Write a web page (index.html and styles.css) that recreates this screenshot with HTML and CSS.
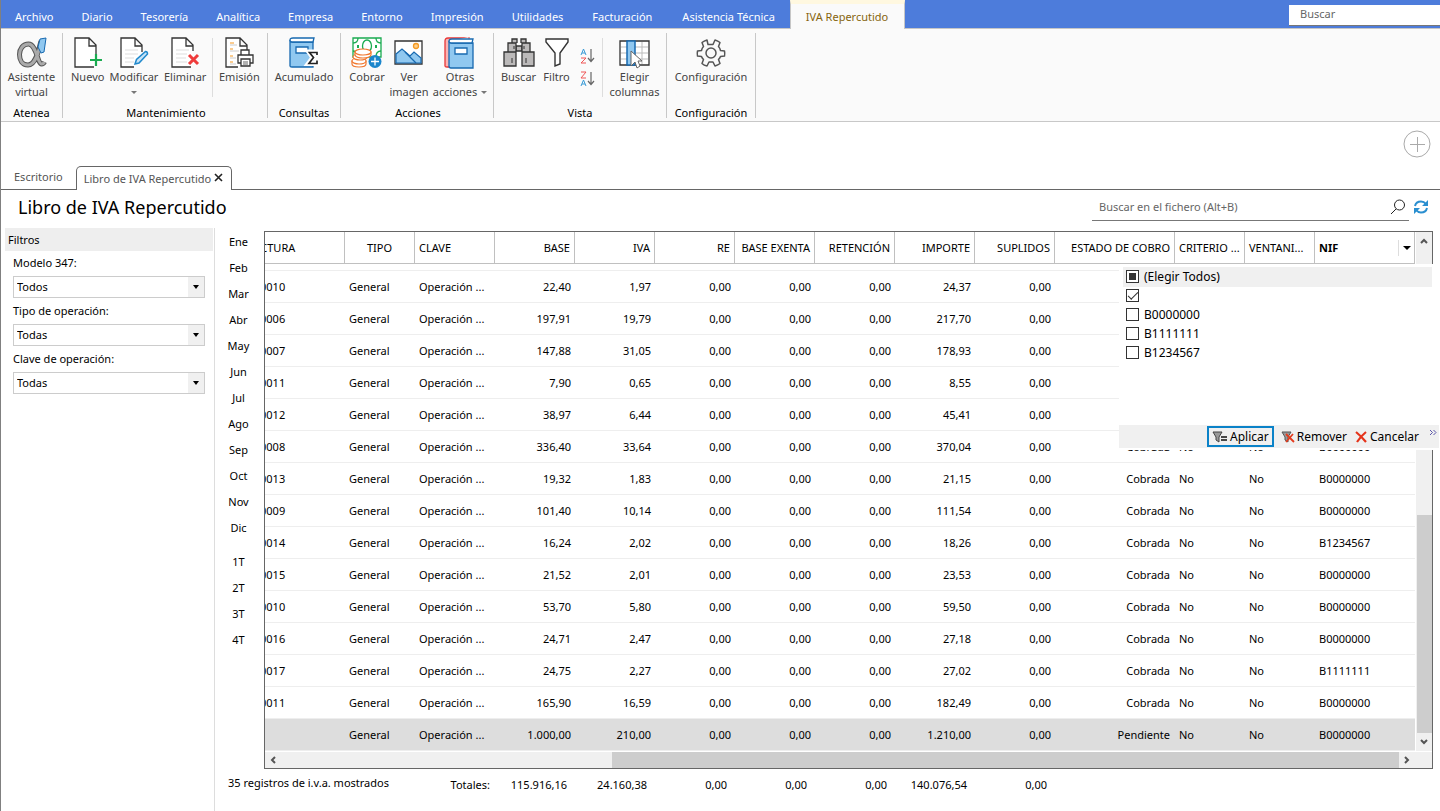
FILE: index.html
```html
<!DOCTYPE html>
<html lang="es">
<head>
<meta charset="utf-8">
<title>Libro de IVA Repercutido</title>
<link rel="stylesheet" href="styles.css">
</head>
<body>
<div class="app">
<header class="menubar">
  <nav class="menu">
    <button>Archivo</button><button>Diario</button><button>Tesorería</button><button>Analítica</button><button>Empresa</button><button>Entorno</button><button>Impresión</button><button>Utilidades</button><button class="roomy">Facturación</button><button class="roomy">Asistencia Técnica</button><button class="roomy current">IVA Repercutido</button>
  </nav>
  <input class="menu-search" type="text" placeholder="Buscar" aria-label="Buscar">
</header>

<section class="ribbon">
  <div class="group g-atenea">
    <div class="tools">
      <button class="tool w-wide">
        <svg width="32" height="32" viewBox="0 0 32 32"><path d="M25 4c-2 8-5 24-13 24C6 28 3.500 23 3.500 17.500S7 7 12.500 7c8 0 9 20 13 20 1.500 0 2.500-1 3-2" fill="none" stroke="#555" stroke-width="5"/><path d="M25 5c-2 8-5 23-13 23C6 28 3.500 23 3.500 17.500S7 7 12.500 7c8 0 9 20 13 20 1.500 0 2.500-1 3-2" fill="none" stroke="#aaa" stroke-width="3"/><path d="M24 2l6-1-2 14-3 1-3-6z" fill="#90c8f0" stroke="#1769b0"/></svg>
        <span>Asistente<br>virtual</span></button>
    </div>
    <h2>Atenea</h2>
  </div>
  <div class="group g-mant">
    <div class="tools">
      <button class="tool w-s">
        <svg width="32" height="32" viewBox="0 0 32 32"><path d="M22 30H3V1h14l7 7v9M17 1v8h7" fill="#fff" stroke="#333" stroke-width="1.300"/><path d="M24 17v12M18 23h12" stroke="#1aab50" stroke-width="2.200"/></svg>
        <span>Nuevo</span></button>
      <button class="tool w-l">
        <svg width="32" height="32" viewBox="0 0 32 32"><path d="M16 30H3V1h14l7 7v7M17 1v8h7" fill="#fff" stroke="#333" stroke-width="1.300"/><path d="M7 13h13M7 17h13M7 21h9M7 25h9" stroke="#ddd"/><path d="M17 27l1.500-4.500 9-8q2 0 2 2.500l-8.500 9z" fill="#c8e4f8" stroke="#2089cc" stroke-width="1.500"/></svg>
        <span>Modificar</span><i class="caret"></i></button>
      <button class="tool w-l">
        <svg width="32" height="32" viewBox="0 0 32 32"><path d="M22 30H3V1h14l7 7v6M17 1v8h7" fill="#fff" stroke="#333" stroke-width="1.300"/><path d="M7 13h13M7 17h11M7 21h10M7 25h11" stroke="#ddd"/><path d="M20 18l9 9M29 18l-9 9" stroke="#ef3b3b" stroke-width="3"/></svg>
        <span>Eliminar</span></button>
      <span class="split"></span>
      <button class="tool w-l">
        <svg width="32" height="32" viewBox="0 0 32 32"><path d="M15 30H3V1h14l7 7v6M17 1v8h7" fill="#fff" stroke="#333" stroke-width="1.300"/><path d="M7 6h4M7 12h3M7 19h3M7 25h3" stroke="#f59a23" stroke-width="1.200"/><path d="M7 8h7M7 14h9M7 21h6M7 27h6" stroke="#ccc"/><path d="M18 18v-5h8v5M18 26h-3v-8h15v8h-3M18 22h9v7h-9z" fill="#fff" stroke="#333" stroke-width="1.300"/><path d="M20 25h5M20 27h5" stroke="#666"/></svg>
        <span>Emisión</span></button>
    </div>
    <h2>Mantenimiento</h2>
  </div>
  <div class="group g-cons">
    <div class="tools">
      <button class="tool w-wide">
        <svg width="32" height="32" viewBox="0 0 32 32"><path d="M2 3v26q0 1 2 1h21V5H4q-2 0-2-2z" fill="#90c8f0" stroke="#1769b0" stroke-width="1.300"/><path d="M2 3q0-2 3-2h21l-1 4H5Q2 5 2 3z" fill="#fff" stroke="#1769b0" stroke-width="1.300"/><path d="M8 10h12v6H8z" fill="#fff" stroke="#1769b0" stroke-width="1.300"/><path d="M30 18v-3h-9l4 5.500-4.500 6H30v-3" fill="none" stroke="#fff" stroke-width="5"/><path d="M29 18v-2.500h-7.500l4 5-4.500 6H29v-3" fill="none" stroke="#222" stroke-width="1.700"/></svg>
        <span>Acumulado</span></button>
    </div>
    <h2>Consultas</h2>
  </div>
  <div class="group g-acc">
    <div class="tools">
      <button class="tool w-s">
        <svg width="32" height="32" viewBox="0 0 32 32"><path d="M2 1h28v19H2z" fill="#fff" stroke="#1aab50" stroke-width="1.300"/><path d="M2 6q5 0 5-5M30 6q-5 0-5-5M30 14q-5 0-5 6M2 14q3 0 4 3" fill="none" stroke="#1aab50" stroke-width="1.300"/><ellipse cx="16" cy="9" rx="4.500" ry="6" fill="#fff" stroke="#1aab50" stroke-width="1.300"/><path d="M7 8v3M25 8v3" stroke="#1aab50" stroke-width="2"/><g fill="#fff" stroke="#f07830" stroke-width="1.200"><path d="M1 24v3q0 3 7 3t7-3v-3z"/><ellipse cx="8" cy="24" rx="7" ry="3"/><ellipse cx="9" cy="20" rx="7" ry="3"/><path d="M4 15v3q1 3 8 3t8-3v-3z"/><ellipse cx="12" cy="15" rx="8" ry="3"/></g><circle cx="24" cy="24.500" r="6.500" fill="#1b86cc"/><path d="M24 20.500v8M20 24.500h8" stroke="#fff" stroke-width="1.300"/></svg>
        <span>Cobrar</span></button>
      <button class="tool w-s">
        <svg width="32" height="32" viewBox="0 0 32 32"><path d="M2 4h27v23H2z" fill="#fff" stroke="#333" stroke-width="1.300"/><path d="M3 17l6-5 8 7 4-4 7 6v5H3z" fill="#90c8f0" stroke="#1769b0" stroke-width="1.200"/><path d="M12 15l11 11" stroke="#1769b0" stroke-width="1.200"/><circle cx="23" cy="9" r="2.500" fill="#ffd08c" stroke="#f59a23" stroke-width="1.300"/></svg>
        <span>Ver<br>imagen</span></button>
      <button class="tool w-wide">
        <svg width="32" height="32" viewBox="0 0 32 32"><path d="M25 1H4Q1 1 1 4v25q0 1 2 1h4" fill="#f8b4b4" stroke="#e83838" stroke-width="1.300"/><path d="M25 0v4H5" fill="#fff" stroke="#e83838"/><path d="M5 4v25q0 2 2 2h22V6H8Q5 6 5 4z" fill="#90c8f0" stroke="#1769b0" stroke-width="1.300"/><path d="M5 4q0-2 3-2h21l-1 4H8Q5 6 5 4z" fill="#fff" stroke="#1769b0" stroke-width="1.300"/><path d="M11 11h12v6H11z" fill="#fff" stroke="#1769b0" stroke-width="1.300"/></svg>
        <span>Otras<br>acciones <i class="caret inline"></i></span></button>
    </div>
    <h2>Acciones</h2>
  </div>
  <div class="group g-vista">
    <div class="tools">
      <button class="tool w-s">
        <svg width="32" height="32" viewBox="0 0 32 32"><g fill="#bbb9b9" stroke="#333" stroke-width="1.300"><path d="M13 9h6v5h-6z"/><path d="M9 6V2h5v4M18 6V2h5v4M5 15V6h8v9M19 15V6h8v9M1 29V15h12v14zM19 29V15h12v14z"/></g><path d="M9 21v5M23 21v5M11 9v3M21 9v3" stroke="#333"/></svg>
        <span>Buscar</span></button>
      <button class="tool w-s">
        <svg width="32" height="32" viewBox="0 0 32 32"><path d="M5 2h22v3l-8 11v11l-5 2V16L5 5z" fill="#fff" stroke="#333" stroke-width="1.400"/></svg>
        <span>Filtro</span></button>
      <div class="sorts">
        <button aria-label="Orden ascendente"><svg width="16" height="16" viewBox="0 0 16 16"><path d="M1 7l2.500-6L6 7M2 5h3" fill="none" stroke="#389ad6"/><path d="M1 10h5l-5 5h5" fill="none" stroke="#ef5555"/><path d="M11 1v12M8 10l3 3.500 3-3.500" fill="none" stroke="#666" stroke-width="1.200"/></svg></button>
        <button aria-label="Orden descendente"><svg width="16" height="16" viewBox="0 0 16 16"><path d="M1 1h5L1 7h5" fill="none" stroke="#ef5555"/><path d="M1 15l2.500-6L6 15M2 13h3" fill="none" stroke="#389ad6"/><path d="M11 1v12M8 10l3 3.500 3-3.500" fill="none" stroke="#666" stroke-width="1.200"/></svg></button>
      </div>
      <span class="split"></span>
      <button class="tool w-l">
        <svg width="32" height="32" viewBox="0 0 32 32"><path d="M1 4h29v24H1z" fill="#fff" stroke="#333" stroke-width="1.300"/><path d="M2 10h27M2 16h27M2 22h27M23 5v22" stroke="#bbb"/><path d="M8 4h8v24H8z" fill="#90c8f0" stroke="#1769b0" stroke-width="1.500"/><path d="M12 14l11 10h-4l2 5-3 2-2-6-4 4z" fill="#fff" stroke="#666"/></svg>
        <span>Elegir<br>columnas</span></button>
    </div>
    <h2>Vista</h2>
  </div>
  <div class="group g-conf">
    <div class="tools">
      <button class="tool w-wide">
        <svg width="32" height="32" viewBox="0 0 32 32"><path d="M13 7.500L12 3q-3 1-5 2.500l1.500 4Q7 11 6.500 13.500L2.500 14q-.5 2.500 0 5l4 .5Q7 21 8.500 22.500L7 26.500q2 2 5 2.500l2-4h4l2 4q3-1 5-2.500l-1.500-4q1.500-1.500 2-3l4-.5q.5-2.500 0-5l-4-.5Q25 11 23.500 9.500L25 5.500Q23 4 20 3l-2 4.500z" fill="none" stroke="#555" stroke-width="1.500" stroke-linejoin="round"/><circle cx="16" cy="16" r="5" fill="none" stroke="#555" stroke-width="1.500"/></svg>
        <span>Configuración</span></button>
    </div>
    <h2>Configuración</h2>
  </div>
</section>

<div class="quick"><button aria-label="Añadir"><svg width="28" height="28" viewBox="0 0 28 28"><circle cx="14" cy="14" r="13" fill="none" stroke="#aaa"/><path d="M14.500 7v15M7 14.500h15" stroke="#aaa"/></svg></button></div>

<nav class="docs">
  <button class="doc">Escritorio</button>
  <button class="doc open">Libro de IVA Repercutido <svg width="10" height="10" viewBox="0 0 10 10"><path d="M1 1l7 7M8 1L1 8" stroke="#222" stroke-width="1.600"/></svg></button>
</nav>

<div class="heading">
  <h1>Libro de IVA Repercutido</h1>
  <label class="file-search"><input type="text" placeholder="Buscar en el fichero (Alt+B)" aria-label="Buscar en el fichero"><svg width="16" height="16" viewBox="0 0 16 16"><circle cx="9.500" cy="6" r="5" fill="none" stroke="#222"/><path d="M6 10l-5 5" stroke="#222"/></svg></label>
  <button class="reload" aria-label="Actualizar"><svg width="16" height="14" viewBox="0 0 16 14"><path d="M2 6q1-4.500 6-4.500 3 0 5 2.500M14 8q-1 4.500-6 4.500-3 0-5-2.500" fill="none" stroke="#2a8fd0" stroke-width="2"/><path d="M15 0v6H9zM1 14V8h6z" fill="#2a8fd0"/></svg></button>
</div>

<main class="work">
  <aside class="filters">
    <h2>Filtros</h2>
    <form>
      <label for="f1">Modelo 347:</label>
      <div class="pick"><select id="f1"><option>Todos</option></select></div>
      <label for="f2">Tipo de operación:</label>
      <div class="pick"><select id="f2"><option>Todas</option></select></div>
      <label for="f3">Clave de operación:</label>
      <div class="pick"><select id="f3"><option>Todas</option></select></div>
    </form>
  </aside>

  <section class="content">
    <div class="ledger">
      <nav class="months">
        <button>Ene</button><button>Feb</button><button>Mar</button><button>Abr</button><button>May</button><button>Jun</button><button>Jul</button><button>Ago</button><button>Sep</button><button>Oct</button><button>Nov</button><button>Dic</button>
        <button class="quarter">1T</button><button>2T</button><button>3T</button><button>4T</button>
      </nav>
      <div class="frame">
        <div class="pane">
          <div class="view">
            <table>
              <colgroup><col class="c-fac"><col class="c-70"><col class="c-80"><col class="c-80"><col class="c-80"><col class="c-80"><col class="c-80"><col class="c-80"><col class="c-80"><col class="c-80"><col class="c-120"><col class="c-70"><col class="c-70"><col></colgroup>
              <thead><tr><th>FACTURA</th><th>TIPO</th><th>CLAVE</th><th>BASE</th><th>IVA</th><th>RE</th><th>BASE EXENTA</th><th>RETENCIÓN</th><th>IMPORTE</th><th>SUPLIDOS</th><th>ESTADO DE COBRO</th><th>CRITERIO ...</th><th>VENTANI...</th><th class="filtered"><div>NIF<button aria-label="Filtrar NIF"></button></div></th></tr></thead>
              <tbody>
                <tr class="cut"><td colspan="14"></td></tr>
                <tr><td>0010</td><td>General</td><td>Operación ...</td><td>22,40</td><td>1,97</td><td>0,00</td><td>0,00</td><td>0,00</td><td>24,37</td><td>0,00</td><td></td><td></td><td></td><td></td></tr>
                <tr><td>0006</td><td>General</td><td>Operación ...</td><td>197,91</td><td>19,79</td><td>0,00</td><td>0,00</td><td>0,00</td><td>217,70</td><td>0,00</td><td></td><td></td><td></td><td></td></tr>
                <tr><td>0007</td><td>General</td><td>Operación ...</td><td>147,88</td><td>31,05</td><td>0,00</td><td>0,00</td><td>0,00</td><td>178,93</td><td>0,00</td><td></td><td></td><td></td><td></td></tr>
                <tr><td>0011</td><td>General</td><td>Operación ...</td><td>7,90</td><td>0,65</td><td>0,00</td><td>0,00</td><td>0,00</td><td>8,55</td><td>0,00</td><td></td><td></td><td></td><td></td></tr>
                <tr><td>0012</td><td>General</td><td>Operación ...</td><td>38,97</td><td>6,44</td><td>0,00</td><td>0,00</td><td>0,00</td><td>45,41</td><td>0,00</td><td></td><td></td><td></td><td></td></tr>
                <tr><td>0008</td><td>General</td><td>Operación ...</td><td>336,40</td><td>33,64</td><td>0,00</td><td>0,00</td><td>0,00</td><td>370,04</td><td>0,00</td><td>Cobrada</td><td>No</td><td>No</td><td>B0000000</td></tr>
                <tr><td>0013</td><td>General</td><td>Operación ...</td><td>19,32</td><td>1,83</td><td>0,00</td><td>0,00</td><td>0,00</td><td>21,15</td><td>0,00</td><td>Cobrada</td><td>No</td><td>No</td><td>B0000000</td></tr>
                <tr><td>0009</td><td>General</td><td>Operación ...</td><td>101,40</td><td>10,14</td><td>0,00</td><td>0,00</td><td>0,00</td><td>111,54</td><td>0,00</td><td>Cobrada</td><td>No</td><td>No</td><td>B0000000</td></tr>
                <tr><td>0014</td><td>General</td><td>Operación ...</td><td>16,24</td><td>2,02</td><td>0,00</td><td>0,00</td><td>0,00</td><td>18,26</td><td>0,00</td><td>Cobrada</td><td>No</td><td>No</td><td>B1234567</td></tr>
                <tr><td>0015</td><td>General</td><td>Operación ...</td><td>21,52</td><td>2,01</td><td>0,00</td><td>0,00</td><td>0,00</td><td>23,53</td><td>0,00</td><td>Cobrada</td><td>No</td><td>No</td><td>B0000000</td></tr>
                <tr><td>0010</td><td>General</td><td>Operación ...</td><td>53,70</td><td>5,80</td><td>0,00</td><td>0,00</td><td>0,00</td><td>59,50</td><td>0,00</td><td>Cobrada</td><td>No</td><td>No</td><td>B0000000</td></tr>
                <tr><td>0016</td><td>General</td><td>Operación ...</td><td>24,71</td><td>2,47</td><td>0,00</td><td>0,00</td><td>0,00</td><td>27,18</td><td>0,00</td><td>Cobrada</td><td>No</td><td>No</td><td>B0000000</td></tr>
                <tr><td>0017</td><td>General</td><td>Operación ...</td><td>24,75</td><td>2,27</td><td>0,00</td><td>0,00</td><td>0,00</td><td>27,02</td><td>0,00</td><td>Cobrada</td><td>No</td><td>No</td><td>B1111111</td></tr>
                <tr><td>0011</td><td>General</td><td>Operación ...</td><td>165,90</td><td>16,59</td><td>0,00</td><td>0,00</td><td>0,00</td><td>182,49</td><td>0,00</td><td>Cobrada</td><td>No</td><td>No</td><td>B0000000</td></tr>
                <tr class="selected"><td></td><td>General</td><td>Operación ...</td><td>1.000,00</td><td>210,00</td><td>0,00</td><td>0,00</td><td>0,00</td><td>1.210,00</td><td>0,00</td><td>Pendiente</td><td>No</td><td>No</td><td>B0000000</td></tr>
              </tbody>
            </table>
          </div>
          <div class="vbar"><svg width="8" height="8" viewBox="0 0 8 8"><path d="M1 6l3-3 3 3" /></svg><span class="vthumb"></span><svg width="8" height="8" viewBox="0 0 8 8"><path d="M1 2l3 3 3-3"/></svg></div>
        </div>
        <div class="hbar"><svg width="8" height="8" viewBox="0 0 8 8"><path d="M6 1L3 4l3 3"/></svg><span class="hthumb"></span><svg width="8" height="8" viewBox="0 0 8 8"><path d="M2 1l3 3-3 3"/></svg></div>

        <div class="popup">
          <ul>
            <li class="all"><label><input type="checkbox" class="some">(Elegir Todos)</label></li>
            <li><label><input type="checkbox" checked aria-label="Sin NIF"></label></li>
            <li><label><input type="checkbox">B0000000</label></li>
            <li><label><input type="checkbox">B1111111</label></li>
            <li><label><input type="checkbox">B1234567</label></li>
          </ul>
          <footer>
            <button class="apply"><svg width="16" height="12" viewBox="0 0 16 12"><path d="M1 1h9L7 6v5l-3-2V6z" fill="#999" stroke="#444"/><path d="M9 6h6M9 9h6" stroke="#111" stroke-width="1.600"/></svg>Aplicar</button>
            <button><svg width="14" height="12" viewBox="0 0 14 12"><path d="M1 1h9L7 6v5l-3-2V6z" fill="#999" stroke="#555"/><path d="M5 3l8 8M12 3l-7 8" stroke="#e43a1c" stroke-width="1.800"/></svg>Remover</button>
            <button><svg width="13" height="12" viewBox="0 0 13 12"><path d="M1 1q5 4 10 10M11 1Q6 5 2 11" stroke="#e5331a" fill="none" stroke-width="2.200"/></svg>Cancelar</button>
            <button class="more" aria-label="Más"><svg width="8" height="6" viewBox="0 0 8 6"><path d="M1 0l2.500 2.500L1 5M4.500 0L7 2.500 4.500 5" fill="none" stroke="#5a55a8"/></svg></button>
          </footer>
        </div>
      </div>
    </div>
    <footer class="totals"><span class="count">35 registros de i.v.a. mostrados</span><span class="tag">Totales:</span><span>115.916,16</span><span>24.160,38</span><span>0,00</span><span>0,00</span><span>0,00</span><span>140.076,54</span><span>0,00</span></footer>
  </section>
</main>
</div>
</body>
</html>
```
FILE: styles.css
```css
* { box-sizing: border-box; }
body { margin: 0; background: #fff; color: #000; font: 11px/15px "Noto Sans", "Open Sans", sans-serif; }
button { border: 0; background: none; padding: 0; margin: 0; font: inherit; color: inherit; }
input, select { font: inherit; color: inherit; border-radius: 0; margin: 0; outline: 0; }
h1, h2, ul { margin: 0; padding: 0; font: inherit; list-style: none; }
svg { display: block; flex: none; }

.app { min-height: 100vh; border-left: 1px solid #808080; display: flex; flex-direction: column; overflow: hidden; }

.menubar { display: flex; justify-content: space-between; height: 29px; background: #4d7cdb; border-bottom: 1px solid #c6c6c6; }
.menu { display: flex; }
.menu button { padding: 5px 14px 0; color: #fff; white-space: nowrap; }
.menu .roomy { padding: 5px 15px 0; }
.menu .current { height: 29px; padding: 0 16px 0 15px; border: 1px solid #c6c6c6; border-top: 4px solid #fff8e0; border-bottom: 0; background: #fafafa; color: #86650e; }
.menu-search { width: 151px; height: 21px; margin-top: 5px; padding: 0 11px 3px; border: 0; border-bottom: 1px solid #777; background: #fff; }
input::placeholder { color: #666; opacity: 1; }

.ribbon { display: flex; height: 93px; padding: 4px 0 3px; background: #fafafa; border-bottom: 1px solid #c8c8c8; }
.group { display: flex; flex-direction: column; justify-content: space-between; border-right: 1px solid #c8c8c8; padding: 4px 2px 0; }
.group h2 { text-align: center; height: 10px; line-height: 10px; }
.g-atenea { width: 62px; }
.g-mant { width: 205px; padding-left: 4px; }
.g-cons { width: 73px; }
.g-acc { width: 153px; padding-left: 4px; }
.g-vista { width: 173px; }
.g-conf { width: 89px; }
.tools { display: flex; justify-content: center; }
.tool { display: flex; flex-direction: column; align-items: center; color: #444; white-space: nowrap; }
.tool span { text-align: center; }
.w-s { width: 42px; }
.g-vista .w-s { width: 38px; }
.w-l { width: 52px; }
.w-wide { width: 60px; }
.split { width: 1px; height: 59px; margin: 1px 1px 0; background: #ddd; }
.g-vista .split { margin: 1px 6px 0 4px; }
.caret { border: 3px solid transparent; border-top-color: #777; border-bottom: 0; margin-top: 7px; }
.caret.inline { display: inline-block; margin: 0 0 2px 1px; }
.sorts { display: flex; flex-direction: column; gap: 7px; padding: 11px 2px 0 4px; }

.quick { display: flex; justify-content: flex-end; align-items: flex-start; padding: 8px 9px 0 0; height: 44px; }
.docs { display: flex; align-items: flex-end; height: 24px; border-bottom: 1px solid #666; color: #555; }
.doc { height: 24px; padding: 0 13px 2px; white-space: nowrap; }
.doc.open { display: flex; align-items: center; gap: 3px; margin-bottom: -1px; padding: 0 7px 1px; border: 1px solid #666; border-bottom: 0; border-radius: 5px 5px 0 0; background: #fff; }

.heading { display: flex; align-items: center; height: 38px; padding: 0 11px 4px 17px; }
.heading h1 { flex: 1; font-size: 18px; line-height: 24px; }
.file-search { display: flex; align-items: center; width: 317px; height: 27px; padding: 0 3px 0 7px; border-bottom: 1px solid #777; }
.file-search input { flex: 1; border: 0; padding: 0; }
.reload { margin-left: 4px; }

.work { flex: 1; display: flex; }
.filters { width: 214px; border-right: 1px solid #ddd; padding-left: 4px; }
.filters h2 { height: 23px; padding-left: 3px; margin-right: 1px; line-height: 23px; background: #eee; }
.filters form { display: flex; flex-direction: column; padding: 4px 9px 0 8px; }
.filters label { height: 21px; line-height: 16px; }
.pick { display: flex; position: relative; height: 22px; margin-bottom: 5px; border: 1px solid #ccc; }
.pick select { flex: 1; border: 0; appearance: none; background: #fff; padding: 0 3px 1px; }
.pick::after { content: ""; position: absolute; right: 5px; top: 8px; border: 3px solid transparent; border-top: 4px solid #000; border-bottom: 0; pointer-events: none; }
.pick::before { content: ""; position: absolute; right: 0; top: 0; width: 16px; height: 20px; background: #f0f0f0; pointer-events: none; }

.content { flex: 1; min-width: 0; }
.ledger { display: flex; padding-top: 1px; }
.months { display: flex; flex-direction: column; width: 47px; margin-right: 2px; }
.months button { height: 26px; padding-bottom: 2px; }
.months .quarter { margin-top: 8px; }
.frame { position: relative; flex: 1; min-width: 0; border: 1px solid #666; margin: 2px 7px 0 0; }
.pane { display: flex; }
.view { flex: 1; min-width: 0; overflow: hidden; }
table { table-layout: fixed; border-collapse: separate; border-spacing: 0; width: calc(100% + 21px); margin-left: -21px; }
.c-fac { width: 101px; }
.c-70 { width: 70px; }
.c-80 { width: 80px; }
.c-120 { width: 120px; }
th, td { height: 32px; padding: 0 4px; text-align: right; white-space: nowrap; font-weight: normal; }
th { border-right: 1px solid #c0c0c0; border-bottom: 1px solid #c0c0c0; }
td { border-bottom: 1px solid #eee; }
th:nth-child(-n+3), td:nth-child(-n+3), th:nth-child(n+12), td:nth-child(n+12) { text-align: left; }
th:nth-child(2) { text-align: center; }
td:nth-child(11) { padding-right: 5px; }
td:first-child { padding-left: 16px; }
.cut td { height: 7px; padding: 0; }
.selected td { background: #ddd; }
th.filtered { font-weight: bold; padding-right: 0; }
.filtered div { display: flex; justify-content: space-between; align-items: center; }
.filtered button { width: 16px; height: 16px; border-left: 1px solid #ddd; display: flex; align-items: center; justify-content: center; }
.filtered button::after { content: ""; border: 4px solid transparent; border-top-color: #000; border-bottom: 0; }
.vbar, .hbar { display: flex; align-items: center; background: #f0f0f0; }
.vbar { flex-direction: column; width: 17px; padding: 5px 0; border-left: 1px solid #fff; }
.vbar path, .hbar path { fill: none; stroke: #555; stroke-width: 2; }
.vthumb { width: 15px; height: 218px; margin: auto 0 5px; background: #cdcdcd; }
.hbar { height: 17px; padding: 0 21px 0 4px; border-top: 1px solid #fff; }
.hthumb { width: 787px; height: 16px; margin: 0 4px 0 auto; background: #cdcdcd; }

.popup { position: absolute; top: 32px; right: -7px; width: 320px; height: 186px; background: #fff; display: flex; flex-direction: column; justify-content: space-between; padding: 3px 0 2px; font-size: 12px; }
.popup ul { padding: 0 7px 0 4px; }
.popup li { height: 19px; padding-left: 3px; }
.popup .all { height: 20px; margin-bottom: -1px; background: #f0f0f0; }
.popup label { display: flex; align-items: center; gap: 5px; height: 19px; }
.popup input { appearance: none; width: 13px; height: 13px; border: 1px solid #333; background: #fff; display: grid; place-items: center; }
.popup .some::after { content: ""; width: 7px; height: 7px; background: #333; }
.popup input:checked::after { content: ""; width: 9px; height: 4px; border: solid #333; border-width: 0 0 1px 1px; rotate: -45deg; margin-bottom: 3px; }
.popup footer { display: flex; align-items: center; height: 23px; padding: 0 1px 0 88px; background: #f0f0f0; }
.popup footer button { display: flex; align-items: center; gap: 2px; height: 21px; padding: 0 4px; }
.popup .apply { border: 2px solid #0a82c8; padding: 0 3px; margin-right: 3px; }
.popup footer .more { margin-left: auto; align-items: flex-start; padding: 4px 1px; }

.totals { display: grid; grid-template-columns: 188px 74px 77px repeat(6, 80px); padding: 7px 0 0 13px; text-align: right; line-height: 17px; }
.totals .count { text-align: left; line-height: 14px; }
```
